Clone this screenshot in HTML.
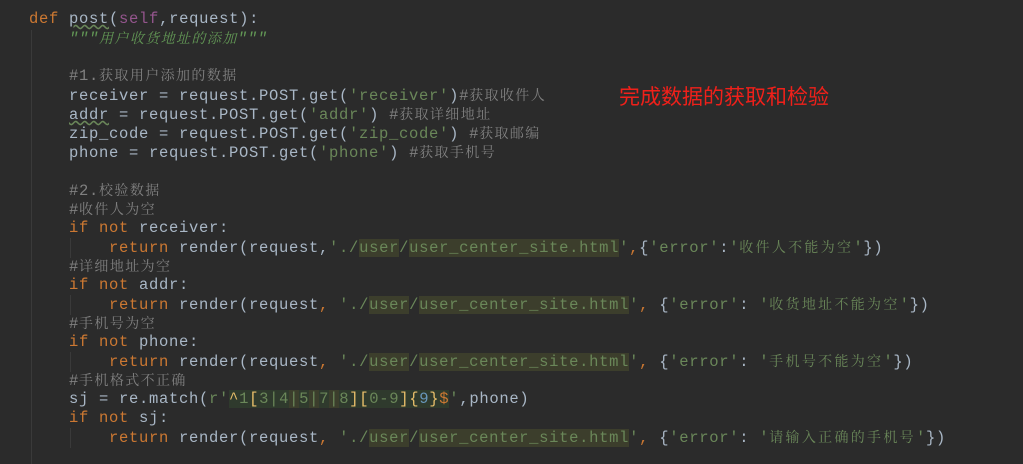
<!DOCTYPE html>
<html><head><meta charset="utf-8"><style>
html,body{margin:0;padding:0;}
body{width:1023px;height:464px;background:#2b2b2b;position:relative;overflow:hidden;font-family:"Liberation Mono","DejaVu Sans Mono",monospace;font-size:15.5px;letter-spacing:0.7px;color:#a9b7c6;}
.l{position:absolute;white-space:pre;height:19px;line-height:19px;}
.k{color:#cc7832}.s{color:#6a8759}.c{color:#808080}.sf{color:#94558d}.d{color:#629755;font-style:italic}
.cj{font-family:"Noto Serif CJK SC","Noto Sans CJK SC",serif;font-size:14px;letter-spacing:1.4px;}
.cs{font-family:"Noto Serif CJK SC","Noto Sans CJK SC",serif;font-size:14px;letter-spacing:2.3px;}
.h{background:#3c3e2c}
.rg{background:#2f3a2d}
.y{color:#e8bf6a}.b{color:#6897bb}
.g{position:absolute;width:1px;background:#3a3a3a;}
</style></head><body>
<div class="g" style="left:31px;top:30px;height:434px"></div>
<div class="g" style="left:70px;top:238px;height:20px"></div>
<div class="g" style="left:70px;top:295px;height:20px"></div>
<div class="g" style="left:70px;top:352px;height:20px"></div>
<div class="g" style="left:70px;top:428px;height:20px"></div>
<div class="l" style="left:29px;top:10px"><span class="k">def </span><span style="text-decoration:underline wavy #6a8759">post</span>(<span class="sf">self</span>,request):</div>
<div class="l d" style="left:69px;top:29px">"""<span class="cj">用户收货地址的添加</span>"""</div>
<div class="l c" style="left:69px;top:66px">#1.<span class="cj">获取用户添加的数据</span></div>
<div class="l" style="left:69px;top:86px">receiver = request.POST.get(<span class="s">'receiver'</span>)<span class="c">#<span class="cj">获取收件人</span></span></div>
<div class="l" style="left:69px;top:105px"><span style="text-decoration:underline wavy #6a8759">addr</span> = request.POST.get(<span class="s">'addr'</span>) <span class="c">#<span class="cj">获取详细地址</span></span></div>
<div class="l" style="left:69px;top:124px">zip_code = request.POST.get(<span class="s">'zip_code'</span>) <span class="c">#<span class="cj">获取邮编</span></span></div>
<div class="l" style="left:69px;top:143px">phone = request.POST.get(<span class="s">'phone'</span>) <span class="c">#<span class="cj">获取手机号</span></span></div>
<div class="l c" style="left:69px;top:181px">#2.<span class="cj">校验数据</span></div>
<div class="l c" style="left:69px;top:200px">#<span class="cj">收件人为空</span></div>
<div class="l" style="left:69px;top:219px"><span class="k">if not </span>receiver:</div>
<div class="l" style="left:109px;top:238px"><span class="k">return </span>render(request,<span class="s">'./<span class="h">user</span>/<span class="h">user_center_site.html</span>'</span><span class="k">,</span>{<span class="s">'error'</span>:<span class="s">'<span class="cs">收件人不能为空</span>'</span>})</div>
<div class="l c" style="left:69px;top:257px">#<span class="cj">详细地址为空</span></div>
<div class="l" style="left:69px;top:276px"><span class="k">if not </span>addr:</div>
<div class="l" style="left:109px;top:295px"><span class="k">return </span>render(request<span class="k">, </span><span class="s">'./<span class="h">user</span>/<span class="h">user_center_site.html</span>'</span><span class="k">, </span>{<span class="s">'error'</span>: <span class="s">'<span class="cs">收货地址不能为空</span>'</span>})</div>
<div class="l c" style="left:69px;top:314px">#<span class="cj">手机号为空</span></div>
<div class="l" style="left:69px;top:333px"><span class="k">if not </span>phone:</div>
<div class="l" style="left:109px;top:352px"><span class="k">return </span>render(request<span class="k">, </span><span class="s">'./<span class="h">user</span>/<span class="h">user_center_site.html</span>'</span><span class="k">, </span>{<span class="s">'error'</span>: <span class="s">'<span class="cs">手机号不能为空</span>'</span>})</div>
<div class="l c" style="left:69px;top:371px">#<span class="cj">手机格式不正确</span></div>
<div class="l" style="left:69px;top:390px">sj = re.match(<span class="s">r'<span class="rg"><span class="y">^</span>1<span class="y">[</span>3|4<span class="h">|</span>5<span class="h">|</span>7<span class="h">|</span>8<span class="y">][</span>0-9<span class="y">]{</span><span class="b">9</span><span class="y">}</span><span class="k">$</span></span>'</span>,phone)</div>
<div class="l" style="left:69px;top:409px"><span class="k">if not </span>sj:</div>
<div class="l" style="left:109px;top:428px"><span class="k">return </span>render(request<span class="k">, </span><span class="s">'./<span class="h">user</span>/<span class="h">user_center_site.html</span>'</span><span class="k">, </span>{<span class="s">'error'</span>: <span class="s">'<span class="cs">请输入正确的手机号</span>'</span>})</div>
<div style="position:absolute;left:619px;top:83px;font-family:'Noto Sans CJK SC',sans-serif;font-size:21px;letter-spacing:0;line-height:26px;color:#f0201a;white-space:nowrap">完成数据的获取和检验</div>
</body></html>
